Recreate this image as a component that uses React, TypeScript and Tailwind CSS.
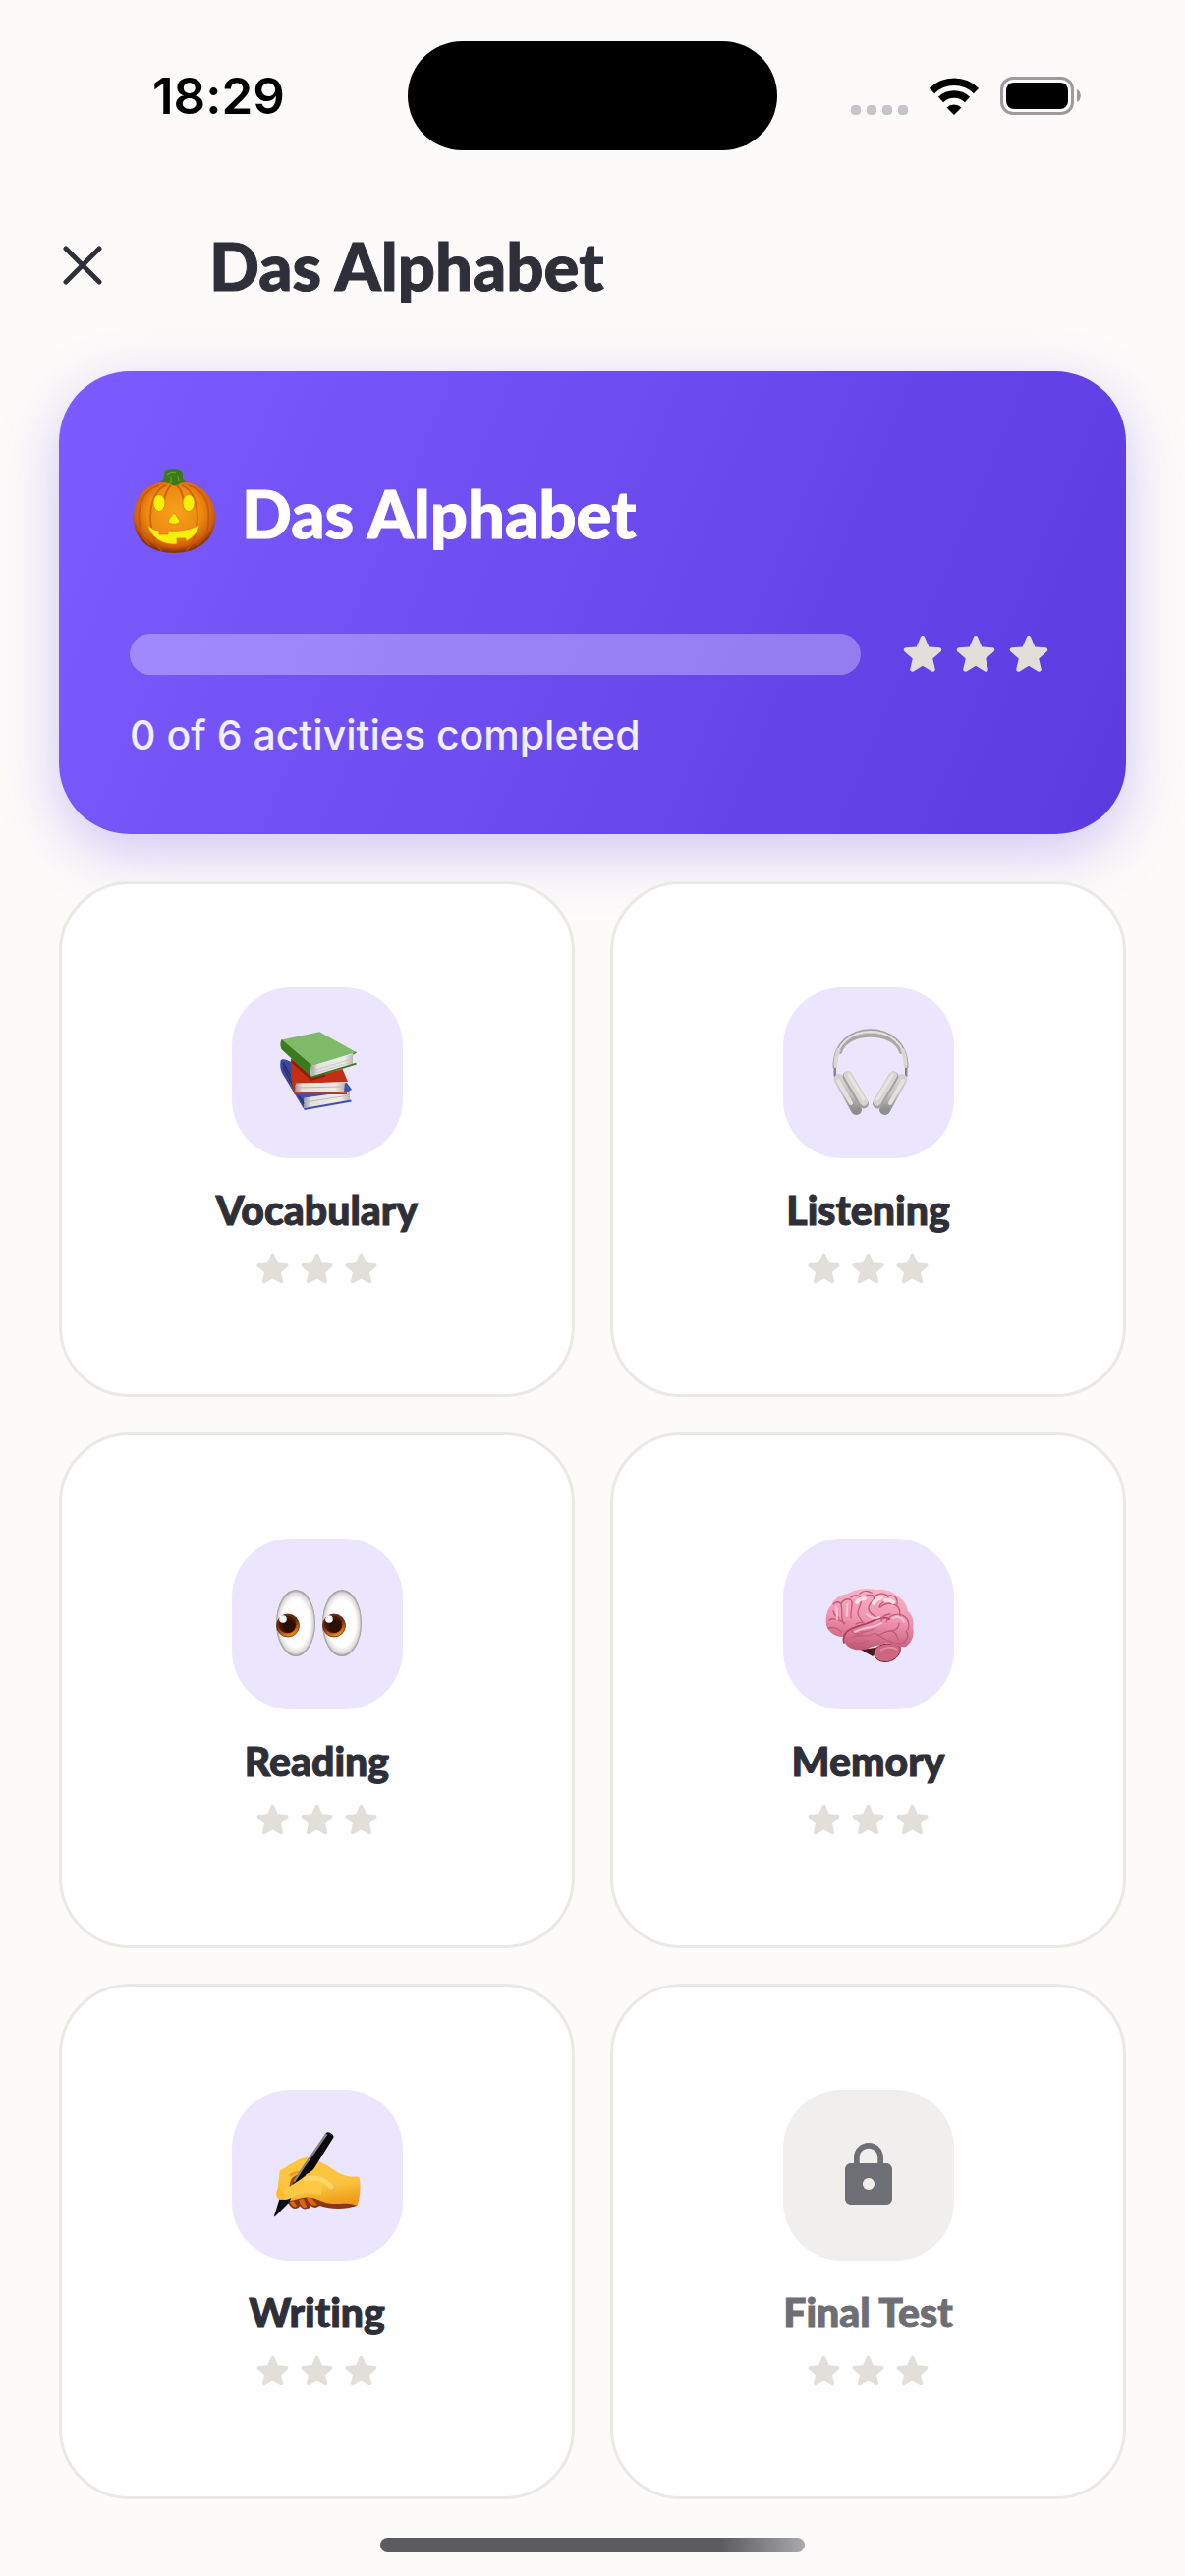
import { ReactNode } from "react";
import { MdLock } from "react-icons/md";

interface Activity {
  id: string;
  title: string;
  icon: ReactNode;
  locked?: boolean;
}

function Star({ className }: { className: string }) {
  return (
    <svg viewBox="0 0 24 24" className={className} fill="#e2dfda" aria-hidden="true">
      <path d="M12 17.27l4.15 2.51c.76.46 1.69-.22 1.49-1.08l-1.1-4.72 3.67-3.18c.67-.58.31-1.68-.57-1.75l-4.83-.41-1.89-4.46c-.34-.81-1.5-.81-1.84 0L9.19 8.63l-4.83.41c-.88.07-1.24 1.17-.57 1.75l3.67 3.18-1.1 4.72c-.2.86.73 1.54 1.49 1.08l4.15-2.5z" />
    </svg>
  );
}

function Stars({ size }: { size: "sm" | "lg" }) {
  const cls = size === "lg" ? "size-[54px]" : "size-[45px]";
  return (
    <div className="flex shrink-0">
      {[0, 1, 2].map((i) => (
        <Star key={i} className={cls} />
      ))}
    </div>
  );
}

function Pumpkin() {
  return (
    <svg viewBox="0 0 90 90" className="size-[90px] shrink-0" aria-hidden="true">
      <defs>
        <radialGradient id="pumpkin" cx="0.5" cy="0.42" r="0.56">
          <stop offset="0" stopColor="#f5a21a" />
          <stop offset="0.6" stopColor="#ee8a10" />
          <stop offset="0.88" stopColor="#cf5c0c" />
          <stop offset="1" stopColor="#8a3408" />
        </radialGradient>
      </defs>
      <path d="M45 14C26 10 4 22 4 50c0 25 20 36 41 36s42-11 42-36c0-27-23-40-42-36z" fill="url(#pumpkin)" />
      <g fill="none" stroke="#c2540a" strokeWidth="1.8" opacity="0.75">
        <path d="M37 17C24 22 19 40 22 60c1 10 5 19 11 24" />
        <path d="M53 17c13 5 18 23 15 43-1 10-5 19-11 24" />
        <path d="M30 17C13 22 8 38 10 57c1 9 5 16 11 21" />
        <path d="M60 17c17 5 22 21 20 40-1 9-5 16-11 21" />
        <path d="M42 17c-5 5-7 12-7 20M48 17c5 5 7 12 7 20" />
      </g>
      <path d="M31 14c3-2 5-5 4-8-1-4 4-6 9-6 6 0 11 2 10 7-1 3 1 5 4 7-4 0-6 0-8 2-2 1-4 2-6 1-4-3-8-3-13-3z" fill="#3c7a17" />
      <path d="M38 6c3-3 6-3 9-2M42 9v6M49 8l1 5" stroke="#64a13a" strokeWidth="1.2" fill="none" />
      <g fill="#f7ee0c" stroke="#d98308" strokeWidth="0.8">
        <ellipse cx="30" cy="35" rx="6" ry="8.5" />
        <ellipse cx="60" cy="35" rx="6" ry="8.5" />
        <path d="M45 45c2 2 5 6 6 9-1 3-11 3-12 0 1-3 4-7 6-9z" />
        <path d="M18 57c4 4 8 6 12 6v4h9v-4c12 1 24-1 32-6-1 7-6 13-14 17v-3h-9v6c-14 1-26-6-30-20z" />
      </g>
    </svg>
  );
}

function Books() {
  return (
    <svg viewBox="0 0 96 96" className="size-24" aria-hidden="true">
      <defs>
        <linearGradient id="pages" x1="0" x2="1">
          <stop offset="0" stopColor="#9b9b9b" />
          <stop offset="0.15" stopColor="#e4e2dd" />
          <stop offset="0.8" stopColor="#eeece8" />
          <stop offset="1" stopColor="#b9b6b1" />
        </linearGradient>
      </defs>
      <path d="M10.5 36c1-3 5-2 11 1l4 31 9 4v13.500L12 48c-2-4-2-9-1.500-12z" fill="#3b4a9e" />
      <path d="M13 42l21 38M13 38l21 35" stroke="#26316e" strokeWidth="1.500" />
      <path d="M24.500 69L78 58l5 7-5 3-44 6z" fill="#4250b4" />
      <path d="M34.500 73.500L81 67v9.500l-46 7z" fill="url(#pages)" />
      <path d="M35 78l45-7" stroke="#bcbab5" />
      <path d="M34.500 85L82.500 76.500" stroke="#3f4eb0" strokeWidth="1.800" />
      <path d="M21 33l21.500 19 31-8 5.500 13-53.500 2 1 10c-2 0-3-1-3-3L21 52z" fill="#c22f13" />
      <path d="M22 36l20 18 14-4" stroke="#6b1206" strokeWidth="3" fill="none" opacity="0.6" />
      <path d="M25.800 58.500L76 57.500 75 67.500l-49.800 1z" fill="url(#pages)" />
      <path d="M27 63l48-1" stroke="#bcbab5" />
      <path d="M24.500 69.200h53.500" stroke="#c22f13" strokeWidth="1.800" />
      <path d="M50.200 6.200L87.500 27 42 41 11.500 14.500z" fill="#7dbb68" />
      <path d="M11.500 14c-1.500 3-1.500 7 0 10L42 52.500c-1-4-1-8 0-12.500z" fill="#3b7a1d" />
      <path d="M42 41l42-12v10L42.500 51z" fill="url(#pages)" />
      <path d="M43 46l40-12M43 49l40-12" stroke="#c9c7c2" />
      <path d="M42 52.300L87.500 38.700" stroke="#3b7a1d" strokeWidth="1.800" />
      <path d="M84 29l3.500-2" stroke="#4c8f30" strokeWidth="1.500" />
    </svg>
  );
}

function Headphones() {
  return (
    <svg viewBox="0 0 96 96" className="size-24" aria-hidden="true">
      <defs>
        <linearGradient id="cup" x1="0" y1="0" x2="0" y2="1">
          <stop offset="0" stopColor="#d3d1cf" />
          <stop offset="0.5" stopColor="#c4c2c1" />
          <stop offset="1" stopColor="#8f8e8f" />
        </linearGradient>
      </defs>
      <g fill="none" strokeLinecap="round">
        <path d="M19 27C26 4 74 4 81 27" stroke="#aaa9aa" strokeWidth="4" />
        <path d="M13.500 42C13-7 87-7 86.500 42" stroke="#a3a2a1" strokeWidth="4" />
        <path d="M14 42C13-6 87-6 86 42" stroke="#e5e2dc" strokeWidth="2" />
        <path d="M14.500 40c0-7 1-11 3-15M85.500 40c0-7-1-11-3-15" stroke="#d9d6d0" strokeWidth="4" />
        <path d="M13.800 44v7M86.200 44v7" stroke="#85848a" strokeWidth="2.500" />
      </g>
      <g strokeLinecap="round">
        <path d="M18 54.500l17.500 31M82 54.500l-17.500 31" stroke="url(#cup)" strokeWidth="11" />
        <path d="M17 56l13 23M83 56L70 79" stroke="#e3e1de" strokeWidth="4" />
        <path d="M26.500 51.500l16.500 28M73.500 51.500L57 79.500" stroke="#a3a1a2" strokeWidth="10" />
        <path d="M27 50.500l16 27M73 50.500L57 77.500" stroke="#d8d5d0" strokeWidth="8" />
        <path d="M28 50l15 25M72 50L57 75" stroke="#e8e5e0" strokeWidth="3" />
      </g>
    </svg>
  );
}

function Eyes() {
  return (
    <svg viewBox="0 0 96 96" className="size-24" aria-hidden="true">
      <defs>
        <radialGradient id="eyeball">
          <stop offset="0.7" stopColor="#ffffff" />
          <stop offset="0.9" stopColor="#dddcd9" />
          <stop offset="1" stopColor="#929191" />
        </radialGradient>
        <linearGradient id="iris" x1="0.3" y1="0" x2="0.7" y2="1">
          <stop offset="0.4" stopColor="#6b2a10" />
          <stop offset="0.75" stopColor="#c96410" />
          <stop offset="1" stopColor="#f5a011" />
        </linearGradient>
      </defs>
      {[26, 73].map((cx) => (
        <g key={cx}>
          <ellipse cx={cx} cy="47" rx="20" ry="34" fill="url(#eyeball)" />
          <circle cx={cx - 8} cy="49.500" r="11.500" fill="url(#iris)" stroke="#6b2a14" strokeWidth="0.800" />
          <circle cx={cx - 8.500} cy="48.500" r="8.800" fill="#421a0b" />
          <circle cx={cx - 7} cy="50" r="6.500" fill="#2c0f06" />
          <circle cx={cx - 13} cy="43" r="3.800" fill="#ffffff" />
        </g>
      ))}
    </svg>
  );
}

function Brain() {
  return (
    <svg viewBox="0 0 96 96" className="size-24" aria-hidden="true">
      <defs>
        <linearGradient id="brain" x1="0.55" y1="0" x2="0.4" y2="1">
          <stop offset="0" stopColor="#f7b3c6" />
          <stop offset="0.5" stopColor="#f193b0" />
          <stop offset="1" stopColor="#bf5672" />
        </linearGradient>
      </defs>
      <path d="M40 74l12 7 10-10z" fill="#4a1c10" />
      <path d="M54 75c3-8 20-9 26-4 2 9-7 16-16 15.500-7-.5-12-5-10-11.500z" fill="#cd6680" stroke="#7d2a32" strokeWidth="1" />
      <path d="M60 75c5-4 13-4 17-1" stroke="#e28aa0" strokeWidth="2" fill="none" />
      <path d="M5 49c-1-7 0-15 5-20 3-7 9-11 17-12 8-5 20-6 28-4 9-1 17 1 21 6 7 3 11 10 12 16 5 4 6 10 5 16 2 8-1 16-7 20-7 1-12-2-19-4-8 3-15 3-20 6-8 3-20 1-23-6-1-3-1-4-2-6-7 0-15-4-17-12z" fill="url(#brain)" />
      <g fill="none" stroke="#c25a79" strokeWidth="1.300" strokeLinecap="round">
        <path d="M23 67c-2-6 2-12 7-14 9-4 17-5 24-9 8-3 13-3 15-1" stroke="#a83f5c" strokeWidth="1.800" />
        <path d="M12 28c3-3 7-3 8 0 2 8-1 14 3 20M8 44c5-3 10 0 16 3M20 28c1-4 5-6 9-5 5 2 0 10 1 19" />
        <path d="M30 21c3-3 9-3 10 1 2 5-3 10-3 15 0 4 3 6 5 9M41 22c5-5 12-4 13-1 0 4-7 6-6 12 1 5 6 6 9 9" />
        <path d="M53 21c6-6 14-4 15 0-2 5-9 5-9 10M69 19c6-1 9 4 8 9M60 31c5-5 14-5 18 0 3 4 1 7 2 9" />
        <path d="M66 46c2-7 12-10 18-6 5 3 6 9 4 14M57 60c4-2 8-5 14-5 5 0 8-4 8-8M70 55c5 0 7 4 8 9M86 55c4 5 1 11-5 13" />
        <path d="M31 62c7-5 13 0 19-3 5-3 7-1 12 3 5 3 13 6 18 6M30 54c2 4 7 5 12 3M7 52c5-1 10 0 13 4M39 17c3-3 8-3 12-1M12 35c1 4 3 6 6 7" />
        <path d="M61 45c0-5 5-7 9-7M45 48c-3-2-7-2-10 0M53 53c-5 3-9 3-13 3M33 67c6 2 10 0 14-2" />
      </g>
      <g fill="none" stroke="#fbe6ea" strokeWidth="4" strokeLinecap="round" opacity="0.900">
        <path d="M36 26c2-3 5-4 8-4M53 27c2-4 5-5 8-6M65 24c3-1 6 0 8 2" />
      </g>
      <g fill="none" stroke="#fbc3d2" strokeWidth="2" strokeLinecap="round">
        <path d="M15 31c2 4 0 8 1 12M26 28c1 4-1 8 0 12M46 38c4 4 8 5 13 3M73 42c5-3 10 0 11 4M34 56c9-5 20-4 27-9" />
      </g>
    </svg>
  );
}

function WritingHand() {
  return (
    <svg viewBox="0 0 96 96" className="size-24" aria-hidden="true">
      <defs>
        <linearGradient id="hand" x1="0.3" y1="0" x2="0.6" y2="1">
          <stop offset="0" stopColor="#fdc63c" />
          <stop offset="0.6" stopColor="#fbc440" />
          <stop offset="1" stopColor="#ef9a17" />
        </linearGradient>
      </defs>
      <path d="M16 70c2 8 6 12 9 12 3 0 5-2 5-3 2 3 5 4 7 3 3 0 4-2 4-3 4 3 7 2 9 0 12 4 27 4 38 0l-6-14-50-4z" fill="#8a3612" />
      <path d="M20 75c2 5 6 7 7 4l-3-5zM29 73c2 7 6 10 8 7l-3-8zM37 71c2 6 7 9 11 7l-7-8z" fill="#db6512" />
      <path d="M8 71C6 61 10 50 9.500 44c1-2 6-3 9-6 6-3 13-8 19-8 6 0 10 3 14 5 10 4 17 12 27 14 4 1 9 0 12 1 2 9 1 20-2 29-11-5-21 0-32-3-8-3-15-7-24-5-5 1-10 3-14 3-4 1-8 1-10.500-3z" fill="url(#hand)" />
      <path d="M21 53c2-4 8-7 14-6l3 5-17 15c-3-4-1-10 0-14z" fill="#a3480f" />
      <path d="M20 49c3-3 8-4 13-4" stroke="#ee9f21" strokeWidth="3" fill="none" />
      <path d="M9 73.500L4 89.500c0 .8.500.8 1 .5L19 76l3-6-10-2z" fill="#0a0a0a" />
      <path d="M57 5c1-1 3-1 5 .5 2 1.500 3 3 2.500 4L46 39c-2 4-5 6-9 8L22 61l2-7z" fill="#0a0a0a" />
      <path d="M57.500 6L35 38 24 55" stroke="#858585" strokeWidth="2.200" fill="none" />
      <path d="M10 63c7-1 14-6 20-10 7-5 16-8 24-3l-2 18c-9-1-18-3-26 1-4 2-8 4-12 4-5-1-7-6-4-10z" fill="#fdc844" />
      <path d="M9 60c-3 3-4 9-1 12 3 2 6 1 8-3z" fill="#fcbc2d" />
      <path d="M36 52c10-3 20 1 26 8" stroke="#ffd665" strokeWidth="5" fill="none" strokeLinecap="round" />
    </svg>
  );
}

function StatusBar() {
  return (
    <div className="grid h-[177px] grid-cols-[1fr_376px_1fr] items-center pt-[18px]">
      <time className="pl-[155px] font-[Inter,sans-serif] text-[51px] leading-none font-semibold text-black">
        18:29
      </time>
      <div className="h-[111px] rounded-full bg-black" />
      <div className="flex items-center justify-end gap-[22px] pr-[105px]">
        <svg viewBox="0 0 58 38" className="h-[38px] w-[58px]" fill="#c5c4c8" aria-hidden="true">
          {[0, 16, 32, 48].map((x) => (
            <rect key={x} x={x} y="28" width="10" height="10" rx="4" />
          ))}
        </svg>
        <svg viewBox="0 0 50 38" className="h-[38px] w-[50px]" aria-label="Wi-Fi">
          <g fill="none" stroke="#000" strokeWidth="7.500">
            <path d="M2.500 13.500a32 32 0 0 1 45 0" />
            <path d="M11.500 22.500a19.500 19.500 0 0 1 27 0" />
          </g>
          <path d="M25 38l-7.500-7.500a11 11 0 0 1 15 0z" />
        </svg>
        <svg viewBox="0 0 83 39" className="h-[39px] w-[83px]" aria-label="Battery">
          <rect x="1.500" y="1.500" width="72" height="36" rx="11.500" fill="none" stroke="#9b9a9d" strokeWidth="3" />
          <rect x="6" y="6" width="63" height="27" rx="8" />
          <path d="M78 13c5 2 5 11 0 13z" fill="#9b9a9d" />
        </svg>
      </div>
    </div>
  );
}

function ActivityCard({ activity }: { activity: Activity }) {
  return (
    <button
      type="button"
      disabled={activity.locked}
      className="flex aspect-square flex-col items-center justify-center rounded-[72px] border-3 border-[#ebe9e5] bg-white"
    >
      <span
        className={`flex size-[174px] items-center justify-center rounded-[60px] ${
          activity.locked ? "bg-[#f0efed]" : "bg-[#ebe6fe]"
        }`}
      >
        {activity.icon}
      </span>
      <span
        className={`mt-6 text-[41px] leading-[57px] font-black [-webkit-text-stroke:1px] ${
          activity.locked ? "text-[#6e6f74]" : "text-[#2e2f38]"
        }`}
      >
        {activity.title}
      </span>
      <span className="mt-[9px]">
        <Stars size="sm" />
      </span>
    </button>
  );
}

const activities: Activity[] = [
  { id: "vocabulary", title: "Vocabulary", icon: <Books /> },
  { id: "listening", title: "Listening", icon: <Headphones /> },
  { id: "reading", title: "Reading", icon: <Eyes /> },
  { id: "memory", title: "Memory", icon: <Brain /> },
  { id: "writing", title: "Writing", icon: <WritingHand /> },
  { id: "final", title: "Final Test", icon: <MdLock className="size-[72px] text-[#6e6f74]" />, locked: true },
];

export default function App() {
  const completed = 0;
  const total = activities.length;

  return (
    <div className="min-h-screen bg-[#fcfbf9] font-[Lato,sans-serif] text-[#2e2f38] [font-variant-ligatures:none]">
      <StatusBar />

      <header className="flex h-[186px] items-center gap-[105px] px-[60px]">
        <button type="button" aria-label="Close" className="size-12">
          <svg viewBox="0 0 48 48" className="size-12" stroke="#2e2f38" strokeWidth="5" strokeLinecap="round">
            <path d="M7 7l34 34M41 7L7 41" />
          </svg>
        </button>
        <h1 className="text-[67px] leading-none font-black [-webkit-text-stroke:1px]">Das Alphabet</h1>
      </header>

      <main className="px-[60px] pt-[15px]">
        <section className="rounded-[72px] bg-linear-[113deg] from-[#7c5cff] to-[#5b3bdf] p-[72px] text-white shadow-[0_18px_60px_rgba(108,77,240,0.3)]">
          <div className="flex h-36 items-center gap-6">
            <Pumpkin />
            <h2 className="text-[67px] leading-none font-black [-webkit-text-stroke:1px]">Das Alphabet</h2>
          </div>
          <div className="mt-[45px] flex items-center gap-9">
            <div
              role="progressbar"
              aria-label="Activities completed"
              aria-valuenow={completed}
              aria-valuemax={total}
              className="h-[42px] flex-1 overflow-hidden rounded-full bg-white/30"
            >
              <div className="h-full bg-white" style={{ width: `${(completed / total) * 100}%` }} />
            </div>
            <Stars size="lg" />
          </div>
          <p className="mt-[27px] font-[Inter,sans-serif] text-[41px] leading-[57px] font-medium text-white/90">
            {completed} of {total} activities completed
          </p>
        </section>

        <div className="mt-12 grid grid-cols-2 gap-9">
          {activities.map((activity) => (
            <ActivityCard key={activity.id} activity={activity} />
          ))}
        </div>
      </main>

      <div className="mx-auto mt-[39px] mb-6 h-[15px] w-[432px] rounded-full bg-linear-to-r from-[#5c5c5e] from-80% to-[#a9a9ae]" />
    </div>
  );
}
